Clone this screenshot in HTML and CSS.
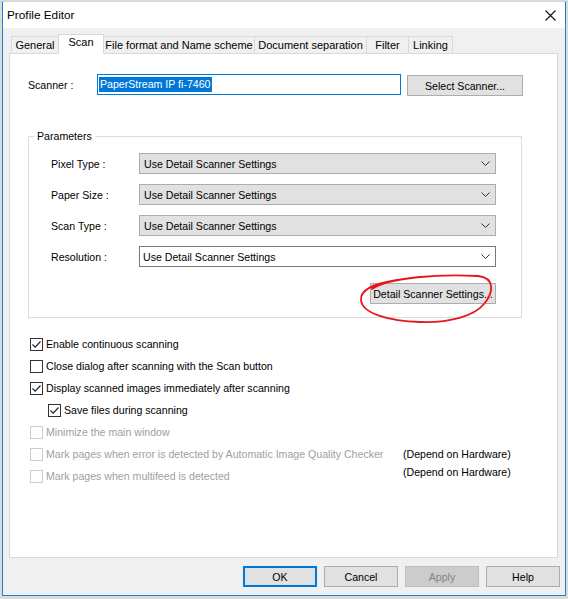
FILE: index.html
```html
<!DOCTYPE html>
<html>
<head>
<meta charset="utf-8">
<link rel="stylesheet" href="styles.css">
</head>
<body>
<div class="window">
  <div class="titlebar">
    <span class="title">Profile Editor</span>
    <svg class="close" width="11" height="11" viewBox="0 0 11 11"><path d="M0.5 0.5 L10.5 10.5 M10.5 0.5 L0.5 10.5" stroke="#111" stroke-width="1.1" fill="none"/></svg>
  </div>
  <div class="body">
    <div class="tabs">
      <div class="tab t-general">General</div>
      <div class="tab sel t-scan">Scan</div>
      <div class="tab nb t-file">File format and Name scheme</div>
      <div class="tab t-doc">Document separation</div>
      <div class="tab t-filter">Filter</div>
      <div class="tab last t-link">Linking</div>
    </div>
    <div class="panel">
      <div class="scanner-row">
        <span class="scanner-label">Scanner :</span>
        <div class="textbox"><span class="hl">PaperStream IP fi-7460</span></div>
        <div class="btn select-btn">Select Scanner...</div>
      </div>

      <fieldset class="params">
        <legend>Parameters</legend>
        <div class="prow">
          <span class="plabel">Pixel Type :</span>
          <div class="combo">Use Detail Scanner Settings<svg class="chev" width="9" height="5" viewBox="0 0 9 5"><path d="M0.5 0.5 L4.5 4.5 L8.5 0.5" stroke="#333" fill="none"/></svg></div>
        </div>
        <div class="prow">
          <span class="plabel">Paper Size :</span>
          <div class="combo">Use Detail Scanner Settings<svg class="chev" width="9" height="5" viewBox="0 0 9 5"><path d="M0.5 0.5 L4.5 4.5 L8.5 0.5" stroke="#333" fill="none"/></svg></div>
        </div>
        <div class="prow">
          <span class="plabel">Scan Type :</span>
          <div class="combo">Use Detail Scanner Settings<svg class="chev" width="9" height="5" viewBox="0 0 9 5"><path d="M0.5 0.5 L4.5 4.5 L8.5 0.5" stroke="#333" fill="none"/></svg></div>
        </div>
        <div class="prow">
          <span class="plabel">Resolution :</span>
          <div class="combo edit">Use Detail Scanner Settings<svg class="chev" width="9" height="5" viewBox="0 0 9 5"><path d="M0.5 0.5 L4.5 4.5 L8.5 0.5" stroke="#333" fill="none"/></svg></div>
        </div>
        <div class="detail-row">
          <div class="btn detail-btn">Detail Scanner Settings...</div>
        </div>
      </fieldset>

      <div class="checks">
        <div class="crow"><span class="cb on"><svg width="11" height="11" viewBox="0 0 11 11"><path d="M1.5 5.5 L4.2 8.2 L9.5 2.5" stroke="#222" stroke-width="1.2" fill="none"/></svg></span>Enable continuous scanning</div>
        <div class="crow"><span class="cb"></span>Close dialog after scanning with the Scan button</div>
        <div class="crow"><span class="cb on"><svg width="11" height="11" viewBox="0 0 11 11"><path d="M1.5 5.5 L4.2 8.2 L9.5 2.5" stroke="#222" stroke-width="1.2" fill="none"/></svg></span>Display scanned images immediately after scanning</div>
        <div class="crow indent"><span class="cb on"><svg width="11" height="11" viewBox="0 0 11 11"><path d="M1.5 5.5 L4.2 8.2 L9.5 2.5" stroke="#222" stroke-width="1.2" fill="none"/></svg></span>Save files during scanning</div>
        <div class="crow dis"><span class="cb"></span>Minimize the main window</div>
        <div class="crow dis"><span class="cb"></span><span class="ctext">Mark pages when error is detected by Automatic Image Quality Checker</span><span class="hw">(Depend on Hardware)</span></div>
        <div class="crow dis"><span class="cb"></span><span class="ctext">Mark pages when multifeed is detected</span><span class="hw up">(Depend on Hardware)</span></div>
      </div>

      <svg class="circle" width="145" height="60" viewBox="0 0 145 60"><path d="M17 19 C 35 7, 85 4, 123 6 C 140 8, 139 22, 129 34 C 119 46, 95 53, 65 52 C 35 51, 7 44, 6 30 C 5 20, 17 14, 42 10" stroke="#e8151b" stroke-width="1.8" fill="none" stroke-linecap="round"/></svg>
    </div>
    <div class="buttons">
      <div class="btn dlg default">OK</div>
      <div class="btn dlg">Cancel</div>
      <div class="btn dlg disabled">Apply</div>
      <div class="btn dlg">Help</div>
    </div>
  </div>
</div>
</body>
</html>
```
FILE: styles.css
```css
html, body {
  margin: 0;
  padding: 0;
}
body {
  background: #dcdcd6;
  width: 568px;
  height: 599px;
  overflow: hidden;
  font-family: "Liberation Sans", Arial, sans-serif;
  font-size: 10.6px;
  color: #000;
}
.window {
  box-sizing: border-box;
  margin: 1px 0 0 2px;
  width: 564px;
  height: 595px;
  border: 1px solid #1a7fd6;
  border-top-color: #cfdbe6;
  background: #f0f0f0;
  display: flex;
  flex-direction: column;
}
.titlebar {
  height: 26px;
  background: #fff;
  display: flex;
  align-items: center;
  justify-content: space-between;
  padding: 0 8px 0 4px;
  flex: none;
}
.title {
  font-size: 11.8px;
  color: #000;
}
.close {
  margin-right: 1px;
}
.body {
  flex: 1;
  display: flex;
  flex-direction: column;
  padding: 6px 0 0 6px;
  position: relative;
}
.tabs {
  display: flex;
  align-items: flex-end;
  height: 19px;
  padding-left: 2px;
  position: relative;
  z-index: 2;
}
.tab {
  box-sizing: border-box;
  height: 17px;
  border-top: 1px solid #d9d9d9;
  border-left: 1px solid #d9d9d9;
  background: #f0f0f0;
  font-size: 11px;
  line-height: 16px;
  text-align: center;
  white-space: nowrap;
}
.tab.nb { border-left: none; }
.tab.last { border-right: 1px solid #d9d9d9; }
.tab.sel {
  height: 20px;
  margin-bottom: -1px;
  background: #fff;
  border: 1px solid #d9d9d9;
  border-bottom: none;
  line-height: 15px;
}
.t-general { width: 47px; }
.t-scan { width: 46px; }
.t-file { width: 150px; }
.t-doc { width: 112px; }
.t-filter { width: 42px; }
.t-link { width: 45px; }

.panel {
  position: relative;
  box-sizing: border-box;
  width: 549px;
  height: 505px;
  background: #fff;
  border: 1px solid #d9d9d9;
  padding: 20px 0 0 18px;
}
.scanner-row {
  display: flex;
  align-items: center;
  height: 21px;
}
.scanner-label {
  width: 69px;
}
.textbox {
  box-sizing: border-box;
  width: 304px;
  height: 21px;
  border: 1px solid #0078d7;
  padding: 2px 1px;
  display: flex;
  align-items: center;
}
.hl {
  background: #0078d7;
  color: #fff;
  line-height: 15px;
  padding: 0 1px;
}
.btn {
  box-sizing: border-box;
  height: 21px;
  background: #e1e1e1;
  border: 1px solid #adadad;
  display: flex;
  align-items: center;
  justify-content: center;
  white-space: nowrap;
}
.select-btn {
  width: 116px;
  margin-left: 6px;
  margin-top: 2px;
}
.params {
  box-sizing: border-box;
  width: 494px;
  margin: 34px 0 0 0;
  padding: 10px 25px 13px 22px;
  border: 1px solid #dcdcdc;
  min-width: 0;
}
.params legend {
  padding: 0 3px;
  margin-left: -17px;
  line-height: 14px;
}
.prow {
  display: flex;
  align-items: center;
  height: 21px;
  margin-bottom: 10px;
}
.plabel {
  width: 88px;
}
.combo {
  box-sizing: border-box;
  flex: 1;
  height: 21px;
  background: #e1e1e1;
  border: 1px solid #adadad;
  padding: 0 4px;
  display: flex;
  align-items: center;
  justify-content: space-between;
}
.combo.edit {
  background: #fff;
  border-color: #7a7a7a;
  padding-left: 3px;
}
.chev {
  margin-right: 1px;
}
.detail-row {
  display: flex;
  justify-content: flex-end;
  margin-top: 16px;
}
.detail-btn {
  width: 126px;
}
.checks {
  margin-top: 15px;
  margin-left: 2px;
  display: flex;
  flex-direction: column;
}
.crow {
  display: flex;
  align-items: center;
  height: 22px;
}
.crow.indent {
  padding-left: 18px;
}
.cb {
  box-sizing: border-box;
  width: 13px;
  height: 13px;
  border: 1px solid #333;
  background: #fff;
  margin-right: 3px;
  flex: none;
  display: flex;
  align-items: center;
  justify-content: center;
}
.crow.dis {
  color: #a0a0a0;
}
.crow.dis .cb {
  border-color: #cccccc;
}
.ctext {
  width: 357px;
}
.hw {
  color: #000;
}
.hw.up {
  margin-top: -8px;
}
.circle {
  position: absolute;
  left: 345px;
  top: 216px;
}
.buttons {
  display: flex;
  justify-content: flex-end;
  gap: 7px;
  padding: 8px 5px 0 0;
}
.btn.dlg {
  width: 74px;
}
.btn.default {
  border: 2px solid #0078d7;
}
.btn.disabled {
  background: #cccccc;
  border-color: #bfbfbf;
  color: #838383;
}
```
